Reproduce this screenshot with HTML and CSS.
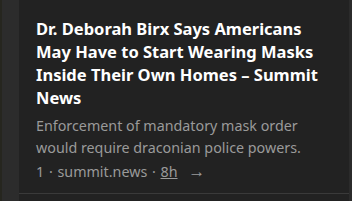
FILE: index.html
```html
<!DOCTYPE html>
<html>
<head>
<meta charset="utf-8">
<link rel="stylesheet" href="styles.css">
</head>
<body>
<div class="layout">
  <div class="rail"></div>
  <main class="feed">
    <article class="item">
      <h2 class="title">Dr. Deborah Birx Says Americans May Have to Start Wearing Masks Inside Their Own Homes – Summit News</h2>
      <p class="desc">Enforcement of mandatory mask order would require draconian police powers.</p>
      <div class="meta">1 · summit.news · <span class="time">8h</span> <span class="arrow">→</span></div>
    </article>
  </main>
  <div class="edge"></div>
</div>
</body>
</html>
```
FILE: styles.css
```css
html, body {
  margin: 0;
  padding: 0;
  background: #222222;
  width: 352px;
  height: 201px;
  overflow: hidden;
}
.layout {
  display: flex;
  height: 201px;
}
.rail {
  width: 17px;
  flex: none;
  background: #2c2c2c;
  border-left: 2px solid #26261f;
}
.feed {
  flex: 1;
  background: #222222;
}
.edge {
  width: 3px;
  flex: none;
  background: #2b2b2b;
}
.item {
  padding: 17px 10px 10px 17px;
  border-bottom: 1px solid #3a3a3a;
  font-family: "Noto Sans", "Open Sans", sans-serif;
}
.title {
  margin: 0;
  color: #ffffff;
  font-size: 16.5px;
  font-weight: 700;
  line-height: 23px;
}
.desc {
  margin: 6px 0 0;
  color: #9a9a9a;
  font-size: 14.3px;
  line-height: 22px;
}
.meta {
  margin-top: 1px;
  color: #9a9a9a;
  font-size: 14.3px;
  line-height: 22px;
  word-spacing: 1px;
}
.time {
  text-decoration: underline;
}
.arrow {
  margin-left: 6px;
  font-size: 17px;
}
```
